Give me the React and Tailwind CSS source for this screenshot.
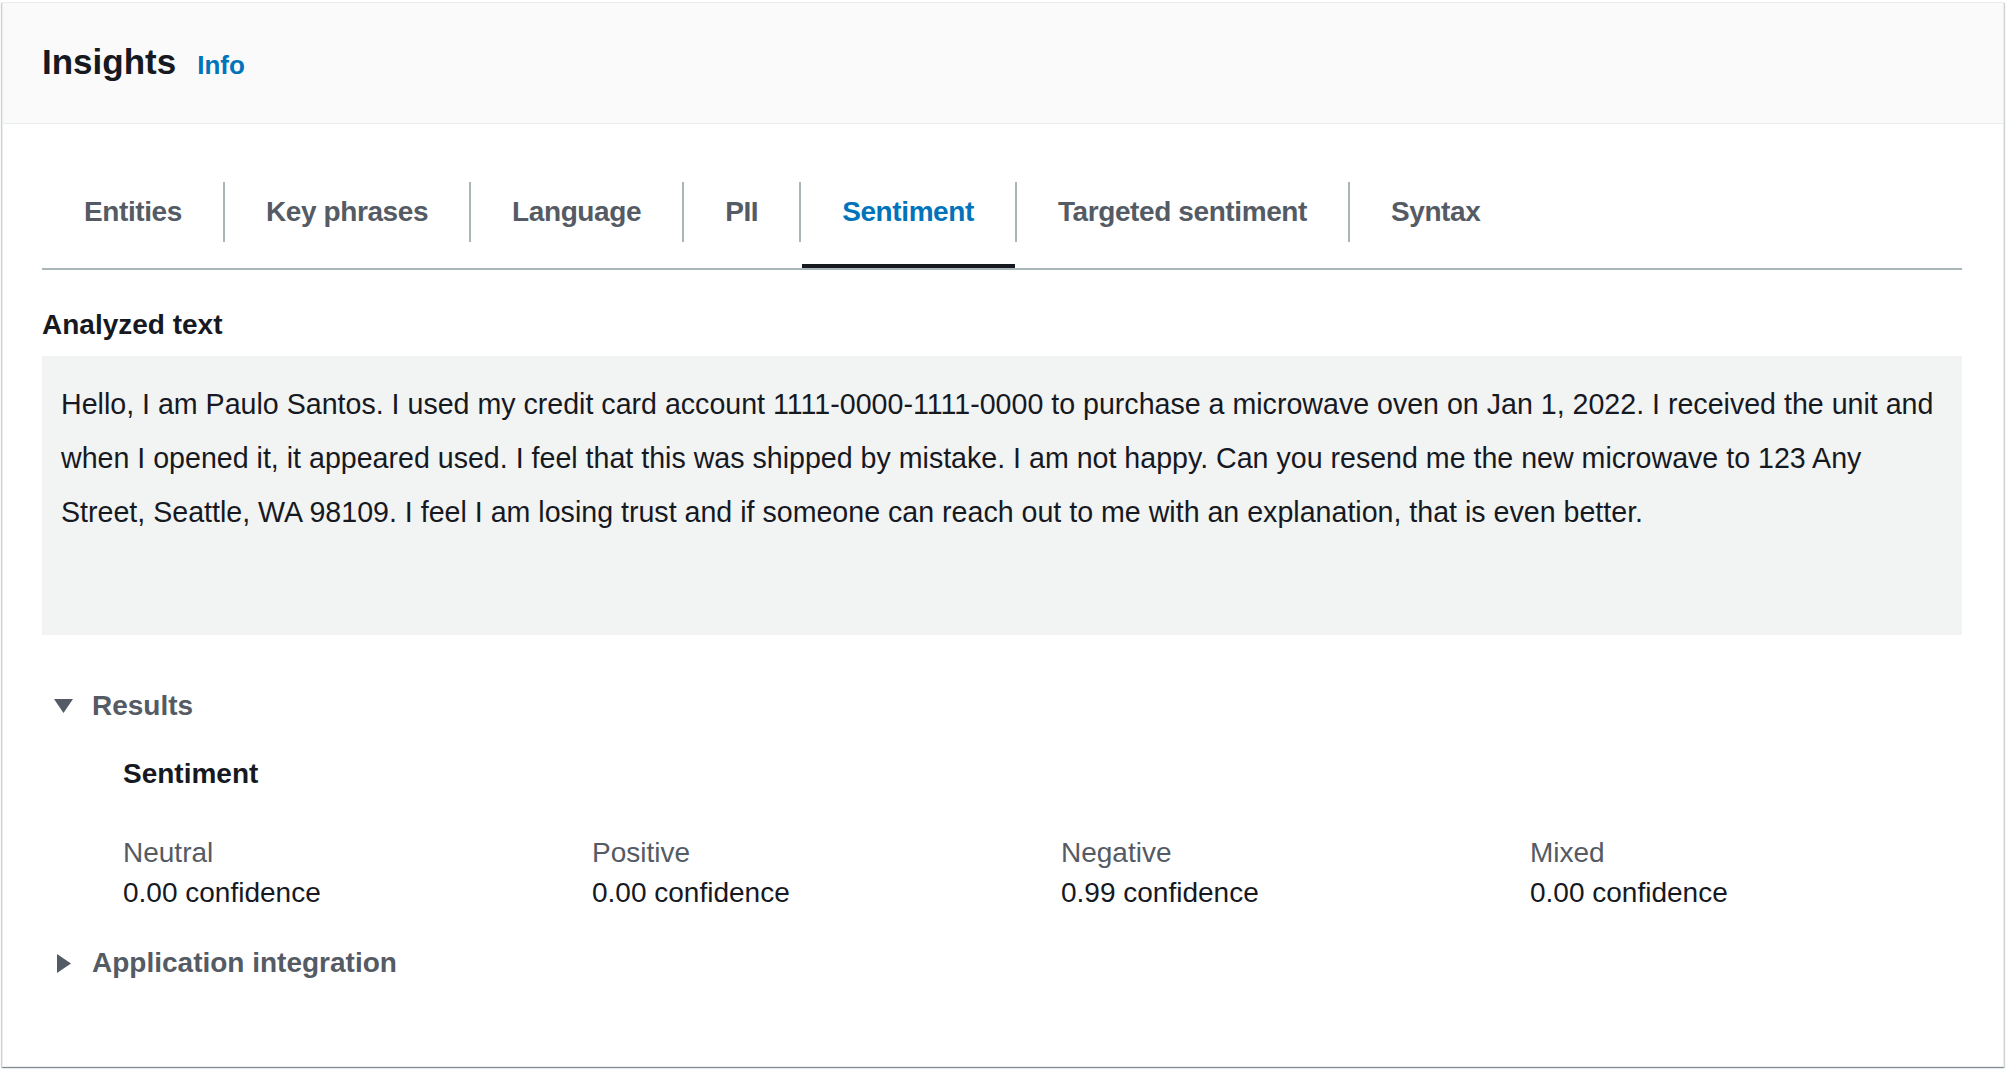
import React from 'react';

const tabs = ['Entities', 'Key phrases', 'Language', 'PII', 'Sentiment', 'Targeted sentiment', 'Syntax'];

const scores = [
  { label: 'Neutral', value: '0.00 confidence' },
  { label: 'Positive', value: '0.00 confidence' },
  { label: 'Negative', value: '0.99 confidence' },
  { label: 'Mixed', value: '0.00 confidence' },
];

const analyzed =
  'Hello, I am Paulo Santos. I used my credit card account 1111-0000-1111-0000 to purchase a microwave oven on Jan 1, 2022. I received the unit and when I opened it, it appeared used. I feel that this was shipped by mistake. I am not happy. Can you resend me the new microwave to 123 Any Street, Seattle, WA 98109. I feel I am losing trust and if someone can reach out to me with an explanation, that is even better.';

function CaretDown() {
  return (
    <svg width="19" height="14" viewBox="0 0 19 14" className="fill-[#545b64]">
      <polygon points="0,0 19,0 9.5,14" />
    </svg>
  );
}

function CaretRight() {
  return (
    <svg width="14" height="19" viewBox="0 0 14 19" className="fill-[#545b64]">
      <polygon points="0,0 14,9.5 0,19" />
    </svg>
  );
}

export default function App() {
  const active = 'Sentiment';

  return (
    <div className="w-[2006px] h-[1072px] bg-white p-[2px] font-['Liberation_Sans',Arial,sans-serif] text-[#16191f]">
      <div className="h-[1065px] bg-white border border-[#eaeded] shadow-[0_1px_1px_0_rgba(0,28,36,0.3),1px_1px_1px_0_rgba(0,28,36,0.15),-1px_1px_1px_0_rgba(0,28,36,0.15)]">
        {/* Header */}
        <div className="h-[121px] bg-[#fafafa] border-b border-[#eaeded] pl-[39px] pt-[37px] flex items-baseline">
          <h2 className="text-[35px] leading-[44px] font-bold">Insights</h2>
          <a className="ml-[21px] text-[26px] leading-[44px] font-bold text-[#0073bb]">Info</a>
        </div>

        <div className="pl-[39px] pr-[41px]">
          {/* Tabs */}
          <div className="mt-[58px] flex border-b-2 border-[#aab7b8]">
            {tabs.map((tab, i) => (
              <div key={tab} className="flex flex-col">
                <div
                  className={
                    'h-[60px] flex items-center text-[28px] leading-[36px] font-bold tracking-[-0.4px] ' +
                    (i === 0 ? 'pl-[42px] pr-[41px] ' : 'px-[41px] border-l-2 border-[#aab7b8] ') +
                    (tab === active ? 'text-[#0073bb]' : 'text-[#545b64]')
                  }
                >
                  {tab}
                </div>
                <div className={'mt-[22px] h-[4px] ml-[3px] ' + (tab === active ? 'bg-[#16191f]' : 'bg-transparent')} />
              </div>
            ))}
          </div>

          {/* Analyzed text */}
          <div className="mt-[37px] text-[28px] leading-[36px] font-bold">Analyzed text</div>
          <div className="mt-[13px] h-[279px] bg-[#f2f3f3] px-[19px] pt-[21px] text-[28.6px] leading-[54px]">
            {analyzed}
          </div>

          {/* Results */}
          <div className="mt-[53px] flex items-center">
            <div className="ml-[12px] w-[19px] mr-[19px] flex justify-center">
              <CaretDown />
            </div>
            <span className="text-[28px] leading-[36px] font-bold text-[#545b64]">Results</span>
          </div>

          <div className="pl-[81px]">
            <div className="mt-[32px] text-[28px] leading-[36px] font-bold">Sentiment</div>
            <div className="mt-[41px] grid grid-cols-[repeat(4,469px)]">
              {scores.map((s) => (
                <div key={s.label} className="text-[28px] leading-[40px]">
                  <div className="text-[#545b64]">{s.label}</div>
                  <div>{s.value}</div>
                </div>
              ))}
            </div>
          </div>

          <div className="mt-[32px] flex items-center">
            <div className="ml-[12px] w-[19px] mr-[19px] flex justify-center">
              <CaretRight />
            </div>
            <span className="text-[28px] leading-[36px] font-bold text-[#545b64]">Application integration</span>
          </div>
        </div>
      </div>
    </div>
  );
}
